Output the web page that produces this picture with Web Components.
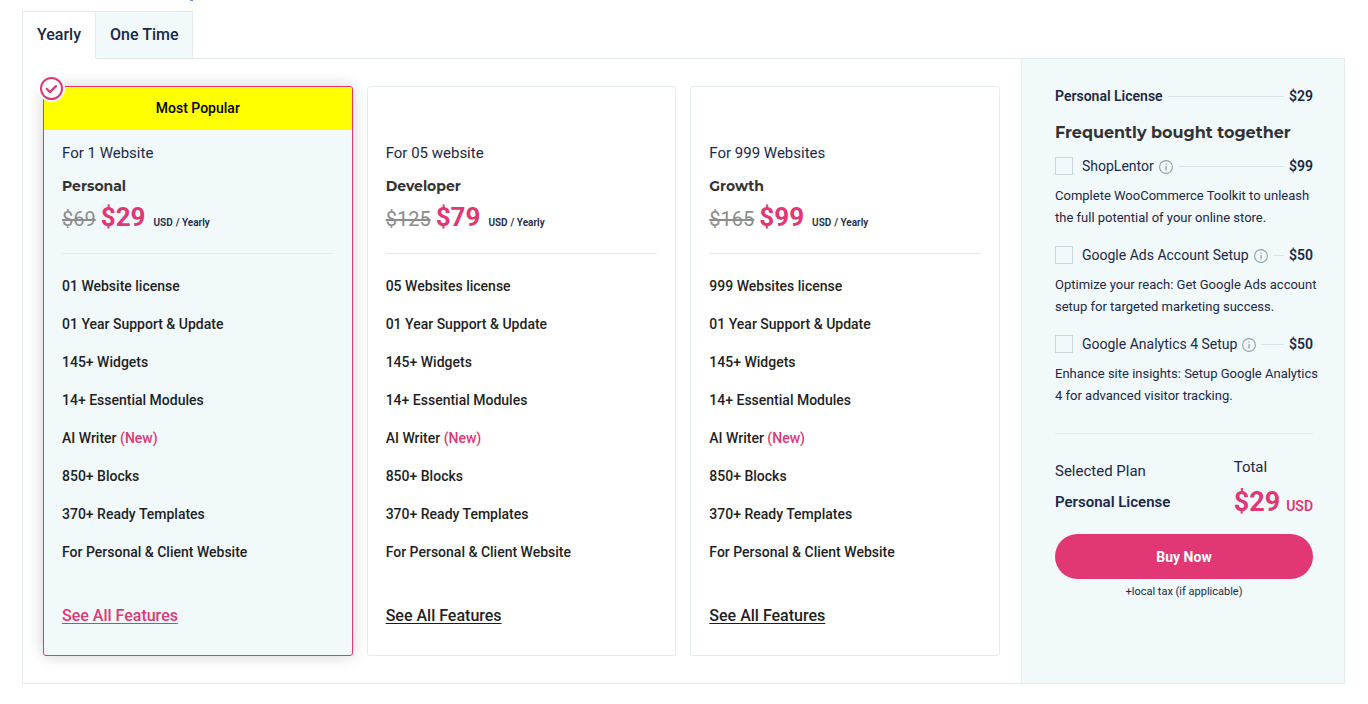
<!DOCTYPE html>
<html lang="en">
<head>
<meta charset="utf-8">
<meta name="viewport" content="width=device-width, initial-scale=1">
<title>Pricing plans</title>
<style>
  :root {
    --pink: #e23775;
    --navy: #1b2847;
    --ink: #1f1f1f;
    --tint: #f1f9fb;
    --line: #e4ecee;
    --heading: Montserrat, Inter, sans-serif;
  }
  body { margin: 0; background: #fff; color: var(--navy); font-family: Roboto, sans-serif; }
</style>
</head>
<body>
<pricing-page></pricing-page>
<script>
class Base extends HTMLElement {
  connectedCallback() {
    if (this.shadowRoot) return;
    this.attachShadow({ mode: "open" }).innerHTML = this.render();
  }
}

customElements.define("plan-tabs", class extends Base {
  render() {
    return `<style>
      :host { display: flex; margin-bottom: -1px; position: relative; }
      button { font: 500 16px/24px Roboto, sans-serif; color: var(--navy); height: 48px; margin: 0;
        padding: 0 14px 1px; border: 1px solid var(--line); background: #fff; border-bottom-color: #fff; cursor: pointer; }
      button + button { background: var(--tint); border-left: 0; border-bottom-color: var(--line); }
    </style>
    <button type="button" aria-pressed="true">Yearly</button><button type="button" aria-pressed="false">One Time</button>`;
  }
});

customElements.define("plan-card", class extends Base {
  render() {
    const on = this.hasAttribute("selected");
    const a = n => this.getAttribute(n);
    const items = [a("license"), "01 Year Support &amp; Update", "145+ Widgets", "14+ Essential Modules",
      "AI Writer <em>(New)</em>", "850+ Blocks", "370+ Ready Templates", "For Personal &amp; Client Website"];
    return `<style>
      :host { display: block; position: relative; border: 1px solid var(--line); border-radius: 3px; background: #fff; min-width: 0; }
      :host([selected]) { border-color: var(--pink); background: var(--tint); box-shadow: 0 0 16px rgba(0,0,0,.18); }
      .banner { height: 43px; font-weight: 500; font-size: 14px; line-height: 43px; text-align: center; color: #000; border-radius: 2px 2px 0 0; }
      :host([selected]) .banner { background: #ff0; }
      .badge { position: absolute; left: -6px; top: -12px; width: 27px; height: 27px; }
      .body { padding: 12px 18px 27px; }
      p { margin: 0; font-size: 15px; line-height: 22px; }
      h3 { margin: 12px 0 4px; font: 700 14px/20px var(--heading); color: #333; }
      .price { display: flex; align-items: baseline; height: 34px; line-height: 34px; }
      s { font-size: 20px; color: #8c8c8c; margin-right: 5px; }
      strong { font-size: 26px; font-weight: 700; color: var(--pink); margin-right: 8px; }
      small { font-size: 10px; font-weight: 600; margin-right: 3px; }
      ul { list-style: none; margin: 19px 0 33px; padding: 13px 0 0; border-top: 1px solid var(--line);
        font-size: 14px; font-weight: 500; line-height: 38px; color: var(--ink); }
      em { font-style: normal; color: var(--pink); }
      a { display: block; width: max-content; font-size: 16px; font-weight: 500; line-height: 24px; color: var(--ink); text-underline-offset: 2px; }
      :host([selected]) a { color: var(--pink); }
    </style>
    <div class="banner">${on ? "Most Popular" : ""}</div>
    ${on ? `<svg class="badge" viewBox="0 0 27 27" aria-hidden="true"><circle cx="13.5" cy="13.5" r="13.5" fill="#fff"/>
      <circle cx="13.5" cy="13.5" r="10.5" fill="#fff" stroke="#e23775" stroke-width="2"/>
      <path d="M8.7 13.8l3.1 3.3 6.2-6" fill="none" stroke="#e23775" stroke-width="2.2" stroke-linecap="round" stroke-linejoin="round"/></svg>` : ""}
    <div class="body">
      <p>${a("sites")}</p>
      <h3>${a("name")}</h3>
      <div class="price"><s>${a("was")}</s><strong>${a("price")}</strong><small>USD</small><small>/ Yearly</small></div>
      <ul>${items.map(i => `<li>${i}</li>`).join("")}</ul>
      <a href="#features">See All Features</a>
    </div>`;
  }
});

customElements.define("add-on", class extends Base {
  render() {
    return `<style>
      :host { display: block; margin-bottom: 15px; }
      .row { display: flex; align-items: center; height: 22px; }
      input { appearance: none; box-sizing: border-box; width: 18px; height: 18px; margin: 0 9px 0 0; border: 1px solid #cbd6da; flex: none; }
      input:checked { background: var(--pink); }
      label { font-size: 14px; line-height: 22px; white-space: nowrap; }
      svg { width: 14px; height: 14px; margin: 2px 5px 0; flex: none; }
      i { flex: 1; height: 1px; background: #dbe5e9; }
      b { font-size: 14px; font-weight: 600; margin-left: 5px; }
      p { margin: 8px 0 0; font-size: 13px; line-height: 22px; white-space: nowrap; }
    </style>
    <div class="row"><input type="checkbox" id="c"><label for="c">${this.getAttribute("name")}</label>
      <svg viewBox="0 0 14 14" fill="none" stroke="#91a1a9" aria-hidden="true"><circle cx="7" cy="7" r="6.4" stroke-width="1.1"/><path d="M7 6v4.5M7 3.4v1.3" stroke-width="1.3"/></svg>
      <i></i><b>${this.getAttribute("price")}</b></div>
    <p><slot></slot></p>`;
  }
});

customElements.define("order-summary", class extends Base {
  render() {
    return `<style>
      :host { display: block; box-sizing: border-box; width: 323px; flex: none; padding: 26px 31px 24px 33px; background: var(--tint); border-left: 1px solid var(--line); }
      .row { display: flex; align-items: center; height: 22px; font-size: 14px; font-weight: 600; }
      .row i { flex: 1; height: 1px; background: #dbe5e9; margin: 0 5px; }
      h2 { margin: 14px 0 10px; font: 700 16px/24px var(--heading); color: #333; white-space: nowrap; }
      .total { display: flex; justify-content: space-between; margin-top: 26px; padding-top: 22px; border-top: 1px solid var(--line); font-size: 15px; line-height: 22px; }
      .total strong { font-weight: 600; display: block; }
      .plan { padding-top: 4px; }
      .plan strong { margin-top: 9px; }
      .sum { color: var(--pink); display: flex; align-items: baseline; gap: 6px; line-height: 36px; margin-top: 6px; font-size: 14px; font-weight: 600; }
      .sum b { font-size: 27px; font-weight: 700; }
      button { display: block; width: 100%; height: 45px; margin: 10px 0 0; border: 0; border-radius: 23px; background: var(--pink); color: #fff; font: 700 14px/20px Roboto, sans-serif; cursor: pointer; }
      .tax { margin: 4px 0 0; font-size: 11px; line-height: 18px; text-align: center; }
    </style>
    <div class="row"><span>Personal License</span><i></i><span>$29</span></div>
    <h2>Frequently bought together</h2>
    <add-on name="ShopLentor" price="$99">Complete WooCommerce Toolkit to unleash<br>the full potential of your online store.</add-on>
    <add-on name="Google Ads Account Setup" price="$50">Optimize your reach: Get Google Ads account<br>setup for targeted marketing success.</add-on>
    <add-on name="Google Analytics 4 Setup" price="$50">Enhance site insights: Setup Google Analytics<br>4 for advanced visitor tracking.</add-on>
    <div class="total">
      <div class="plan">Selected Plan<strong>Personal License</strong></div>
      <div>Total<div class="sum"><b>$29</b>USD</div></div>
    </div>
    <button type="button">Buy Now</button>
    <p class="tax">+local tax (if applicable)</p>`;
  }
});

customElements.define("pricing-page", class extends Base {
  render() {
    return `<style>
      :host { display: block; padding: 0 23px 20px 22px; }
      .mark { height: 11px; padding-left: 168px; }
      .mark::before { content: ""; display: block; width: 3px; height: 1px; background: #6f83ff; }
      .panel { display: flex; border: 1px solid var(--line); }
      .plans { flex: 1; min-width: 0; display: grid; grid-template-columns: repeat(3, minmax(0, 1fr)); gap: 14px; padding: 27px 21px 27px 20px; }
    </style>
    <div class="mark"></div>
    <plan-tabs></plan-tabs>
    <main class="panel">
      <section class="plans">
        <plan-card selected sites="For 1 Website" name="Personal" was="$69" price="$29" license="01 Website license"></plan-card>
        <plan-card sites="For 05 website" name="Developer" was="$125" price="$79" license="05 Websites license"></plan-card>
        <plan-card sites="For 999 Websites" name="Growth" was="$165" price="$99" license="999 Websites license"></plan-card>
      </section>
      <order-summary></order-summary>
    </main>`;
  }
});
</script>
</body>
</html>
